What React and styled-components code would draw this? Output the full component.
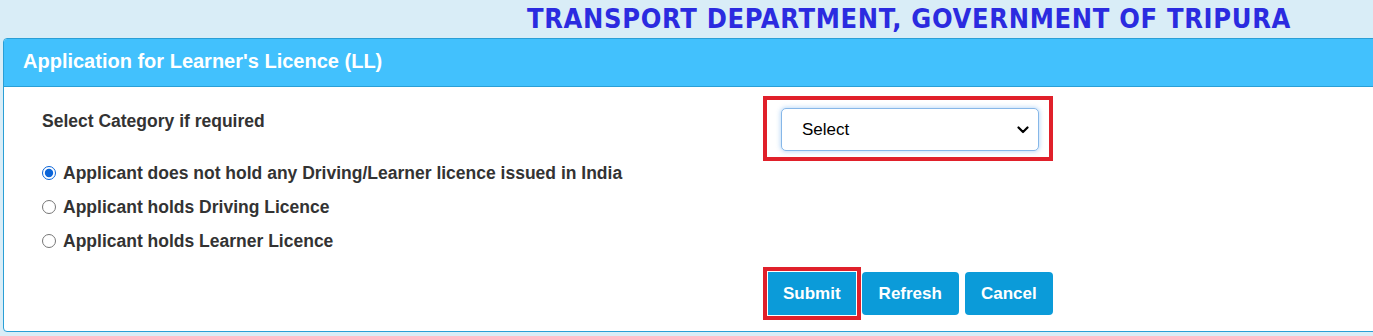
import React from 'react';
import styled, { createGlobalStyle } from 'styled-components';

const GlobalStyle = createGlobalStyle`
  html, body {
    margin: 0;
    padding: 0;
    background: #d9edf7;
  }
  body {
    font-family: "Liberation Sans", Arial, sans-serif;
    width: 1373px;
    height: 336px;
    overflow: hidden;
  }
`;

const Page = styled.div`
  padding: 0 0 0 3px;
`;

const TopTitle = styled.h1`
  margin: 0;
  height: 38px;
  box-sizing: border-box;
  padding: 3px 82px 0 0;
  text-align: right;
  font-family: "DejaVu Sans Condensed", "DejaVu Sans", sans-serif;
  font-stretch: condensed;
  font-weight: bold;
  font-size: 27px;
  line-height: 32px;
  color: #2b2be0;
  letter-spacing: 0.68px;
`;

const Panel = styled.section`
  width: 1390px;
  background: #fff;
  border: 1px solid #2a9fd6;
  border-radius: 4px;
  overflow: hidden;
`;

const PanelHeader = styled.div`
  height: 48px;
  box-sizing: border-box;
  padding: 0 19px 2px;
  display: flex;
  align-items: center;
  background: #42c1fd;
  border-bottom: 1px solid #2a9fd6;
  color: #fff;
  font-weight: bold;
  font-size: 20px;
`;

const PanelBody = styled.div`
  display: grid;
  grid-template-columns: 759px 1fr;
  padding: 9px 0 16px 0;
`;

const LeftCol = styled.div`
  padding: 14px 0 0 38px;
  display: flex;
  flex-direction: column;
`;

const Label = styled.div`
  font-weight: bold;
  font-size: 17.5px;
  line-height: 22px;
  color: #333;
  margin-bottom: 24px;
`;

const RadioRow = styled.label`
  display: flex;
  align-items: center;
  height: 34px;
  font-weight: bold;
  font-size: 17.5px;
  color: #333;
  cursor: pointer;

  input {
    width: 14px;
    height: 14px;
    margin: 0 7px 0 0;
    accent-color: #0a64d8;
  }
`;

const RightCol = styled.div`
  display: flex;
  flex-direction: column;
  align-items: flex-start;
`;

const Highlight = styled.div`
  border: 4px solid #e0202a;
  padding: 8px 10px 6px 14px;
`;

const SelectWrap = styled.div`
  position: relative;
  width: 258px;
  height: 43px;
`;

const Select = styled.select`
  appearance: none;
  width: 100%;
  height: 100%;
  box-sizing: border-box;
  border: 1px solid #86b7e8;
  border-radius: 5px;
  box-shadow: 0 0 4px 1px rgba(120, 180, 240, 0.45);
  background: #fff;
  padding: 0 30px 0 20px;
  font-family: "Liberation Sans", Arial, sans-serif;
  font-size: 17px;
  color: #000;
  outline: none;
`;

const Chevron = styled.svg`
  position: absolute;
  right: 10px;
  top: 18px;
  pointer-events: none;
`;

const ButtonRow = styled.div`
  display: flex;
  gap: 6px;
  margin: 111px 0 0 5px;
`;

const Button = styled.button`
  height: 43px;
  padding: 0 ${({ $pad }) => $pad}px;
  border: none;
  border-radius: ${({ $marked }) => ($marked ? '0' : '4px')};
  background: #0b9bd9;
  color: #fff;
  font-family: "Liberation Sans", Arial, sans-serif;
  font-weight: bold;
  font-size: 17px;
  cursor: pointer;
  outline: ${({ $marked }) => ($marked ? '4px solid #e0202a' : 'none')};
  outline-offset: 1px;
`;

const App = () => {
  return (
    <Page>
      <GlobalStyle />
      <TopTitle>TRANSPORT DEPARTMENT, GOVERNMENT OF TRIPURA</TopTitle>
      <Panel>
        <PanelHeader>Application for Learner's Licence (LL)</PanelHeader>
        <PanelBody>
          <LeftCol>
            <Label>Select Category if required</Label>
            <RadioRow>
              <input type="radio" name="cat" defaultChecked />
              Applicant does not hold any Driving/Learner licence issued in India
            </RadioRow>
            <RadioRow>
              <input type="radio" name="cat" />
              Applicant holds Driving Licence
            </RadioRow>
            <RadioRow>
              <input type="radio" name="cat" />
              Applicant holds Learner Licence
            </RadioRow>
          </LeftCol>
          <RightCol>
            <Highlight>
              <SelectWrap>
                <Select defaultValue="">
                  <option value="">Select</option>
                </Select>
                <Chevron width="12" height="8" viewBox="0 0 12 8">
                  <path d="M1.5 1.5 L6 6 L10.5 1.5" fill="none" stroke="#000" strokeWidth="2.2" strokeLinecap="round" strokeLinejoin="round" />
                </Chevron>
              </SelectWrap>
            </Highlight>
            <ButtonRow>
              <Button $pad={15} $marked>Submit</Button>
              <Button $pad={17}>Refresh</Button>
              <Button $pad={16}>Cancel</Button>
            </ButtonRow>
          </RightCol>
        </PanelBody>
      </Panel>
    </Page>
  );
};

export default App;
